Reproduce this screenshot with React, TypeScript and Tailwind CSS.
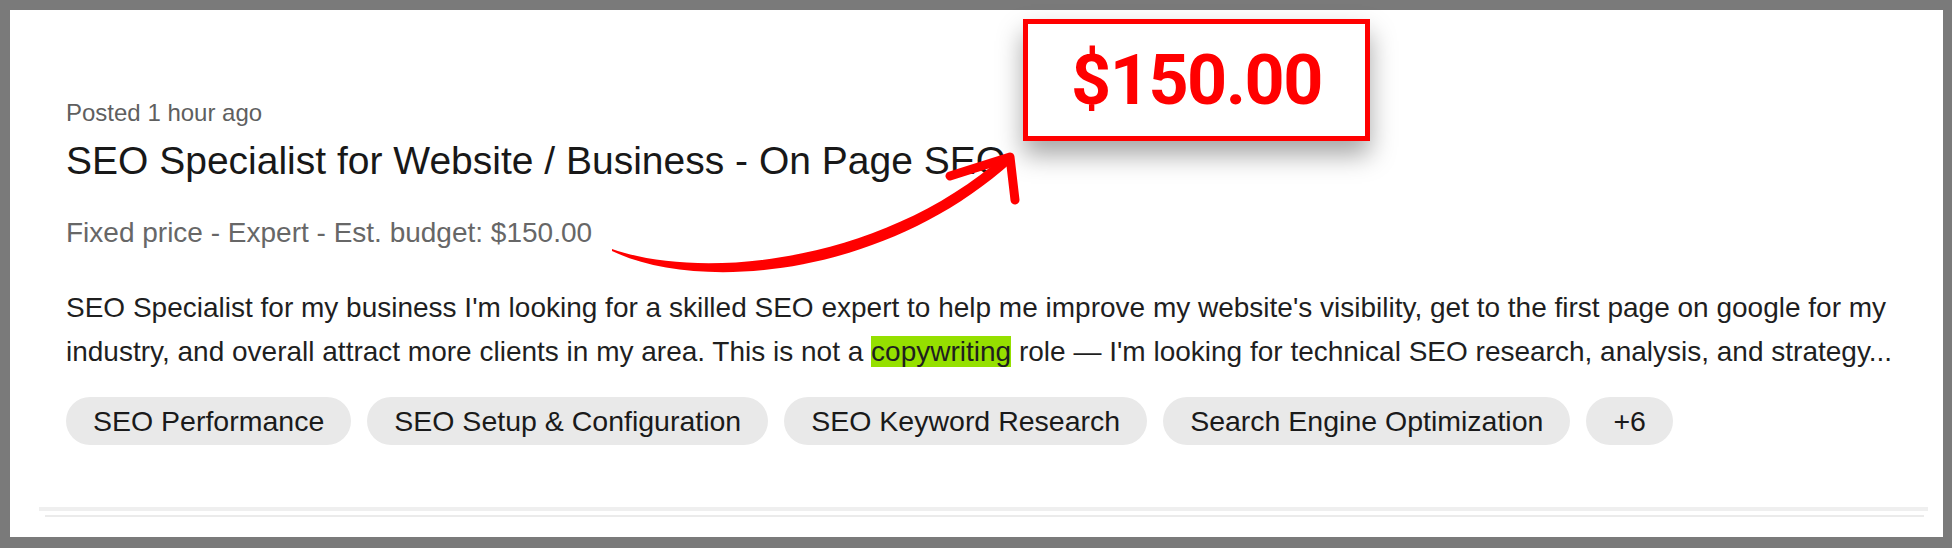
import React from 'react';

const tags = ['SEO Performance', 'SEO Setup & Configuration', 'SEO Keyword Research', 'Search Engine Optimization', '+6'];

const Arrow = () => (
  <svg
    className="absolute left-0 top-0 pointer-events-none"
    width={1952}
    height={548}
    viewBox="0 0 1952 548"
  >
    {/* curved shaft, tapered at the tail */}
    <path
      d="M612 249 C700 280, 880 265, 1005 155 L1012 162 C884 277, 700 293, 612 251 Z"
      fill="#ff0000"
    />
    {/* head */}
    <path
      d="M950 176 L1010 157 L1015 200"
      fill="none"
      stroke="#ff0000"
      strokeWidth={9}
      strokeLinecap="round"
      strokeLinejoin="round"
    />
  </svg>
);

const App = () => {
  return (
    <div className="relative w-[1952px] h-[548px] bg-[#7a7a7a] pt-[10px] pl-[10px] pr-[9px] pb-[11px] font-['Liberation_Sans',Arial,sans-serif]">
      <div className="h-full bg-white">
        {/* Job tile */}
        <div className="pl-[56px] pt-[89px]">
          <p className="text-[24px] leading-[28px] text-[#5f5f5f]">Posted 1 hour ago</p>
          <h2 className="mt-[12px] text-[39px] leading-[44px] text-[#181818] whitespace-nowrap">
            SEO Specialist for Website / Business - On Page SEO
          </h2>
          <p className="mt-[32px] text-[28px] leading-[36px] text-[#676767]">
            Fixed price - Expert - Est. budget: $150.00
          </p>
          <p className="mt-[35px] w-[1850px] text-[28px] leading-[44px] text-[#1f1f1f]">
            SEO Specialist for my business I'm looking for a skilled SEO expert to help me improve my website's
            visibility, get to the first page on google for my industry, and overall attract more clients in my area.
            This is not a <span className="bg-[#95e000]">copywriting</span> role — I'm looking for technical SEO
            research, analysis, and strategy...
          </p>
          <div className="mt-[23px] flex gap-4">
            {tags.map(t => (
              <span
                key={t}
                className="h-[48px] px-[27px] rounded-full bg-[#e9e9e9] text-[28.5px] leading-[48px] text-[#1a1a1a] whitespace-nowrap"
              >
                {t}
              </span>
            ))}
          </div>
        </div>

        {/* dividers */}
        <div className="mt-[62px] ml-[29px] mr-[15px] h-[4px] bg-[#efefef]" />
        <div className="mt-[4px] ml-[35px] mr-[19px] h-[2px] bg-[#ebebeb]" />
      </div>

      {/* Annotation */}
      <div className="absolute left-[1023px] top-[19px] w-[347px] h-[122px] border-[5px] border-[#ff0000] bg-white shadow-[0_14px_24px_rgba(0,0,0,0.35)] flex items-center justify-center">
        <span className="font-['Roboto',sans-serif] font-bold text-[70px] leading-none tracking-[-1.5px] text-[#ff0000]">
          $150.00
        </span>
      </div>
      <Arrow />
    </div>
  );
};

export default App;
